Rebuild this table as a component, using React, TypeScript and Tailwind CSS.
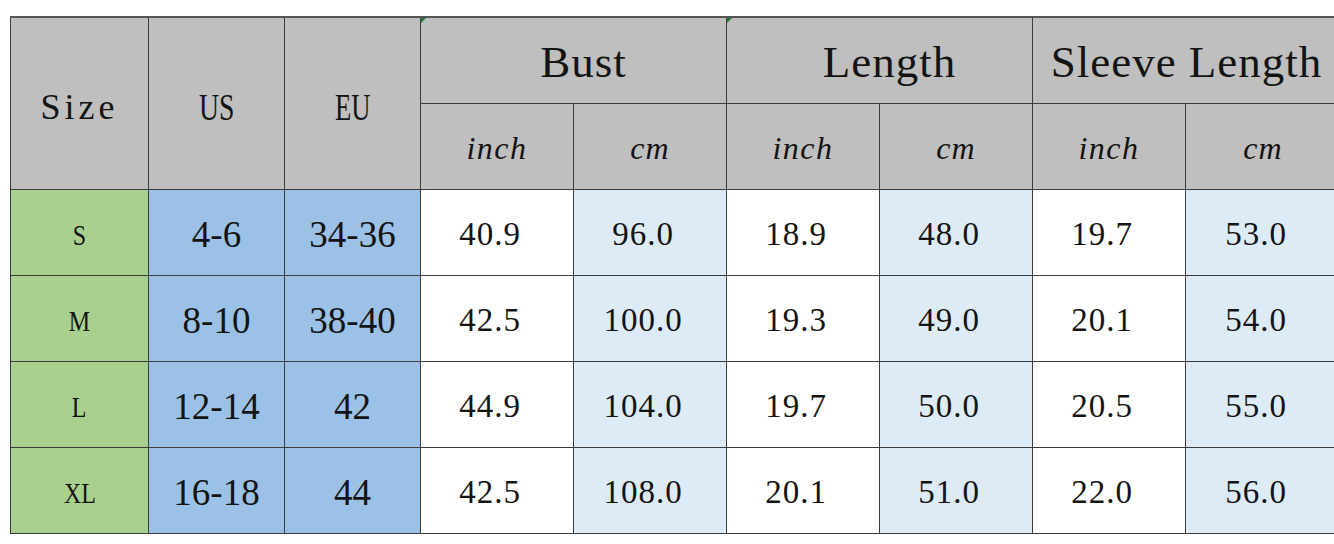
import React from "react";

type Row = {
  size: string;
  us: string;
  eu: string;
  values: Array<string>;
};

const rows: Array<Row> = [
  { size: "S", us: "4-6", eu: "34-36", values: ["40.9", "96.0", "18.9", "48.0", "19.7", "53.0"] },
  { size: "M", us: "8-10", eu: "38-40", values: ["42.5", "100.0", "19.3", "49.0", "20.1", "54.0"] },
  { size: "L", us: "12-14", eu: "42", values: ["44.9", "104.0", "19.7", "50.0", "20.5", "55.0"] },
  { size: "XL", us: "16-18", eu: "44", values: ["42.5", "108.0", "20.1", "51.0", "22.0", "56.0"] },
];

const groups = ["Bust", "Length", "Sleeve Length"];

const cell = "border border-[#3c3c3c] p-0 text-center align-middle";
const head = `${cell} bg-[#bfbfbf] font-normal`;

// little green corner mark, like the spreadsheet flag
const Flag = () => (
  <span className="absolute left-0 top-0 h-0 w-0 border-l-[5px] border-b-[5px] border-l-[#1e7b34] border-b-transparent" />
);

const App = () => {
  return (
    <div className="w-[1334px] h-[544px] overflow-hidden bg-white pt-[16px] pl-[10px] text-[#141414] font-['Liberation_Serif',serif]">
      <table className="w-[1330px] min-w-[1330px] table-fixed border-collapse border-t-2 border-t-[#555]">
        <colgroup>
          <col className="w-[138px]" />
          <col className="w-[136px]" />
          <col className="w-[136px]" />
          <col className="w-[153px]" />
          <col className="w-[153px]" />
          <col className="w-[153px]" />
          <col className="w-[153px]" />
          <col className="w-[153px]" />
          <col className="w-[155px]" />
        </colgroup>
        <thead>
          <tr className="h-[86px]">
            <th rowSpan={2} className={`${head} text-[36px] tracking-[4px] pt-[8px]`}>
              Size
            </th>
            <th rowSpan={2} className={`${head} pt-[8px]`}>
              <span className="inline-block text-[37px] scale-x-[0.75]">US</span>
            </th>
            <th rowSpan={2} className={`${head} pt-[8px]`}>
              <span className="inline-block text-[37px] scale-x-[0.72]">EU</span>
            </th>
            {groups.map((g, i) => (
              <th
                key={g}
                colSpan={2}
                className={`${head} relative text-[45px] tracking-[1px] whitespace-nowrap pt-[4px] ${
                  i < 2 ? "pl-[20px]" : ""
                }`}
              >
                {i < 2 && <Flag />}
                {g}
              </th>
            ))}
          </tr>
          <tr className="h-[86px]">
            {groups.map((g) => (
              <React.Fragment key={g}>
                <th className={`${head} italic text-[32px] tracking-[1.5px] pt-[4px]`}>inch</th>
                <th className={`${head} italic text-[32px] tracking-[1px] pt-[4px]`}>cm</th>
              </React.Fragment>
            ))}
          </tr>
        </thead>
        <tbody>
          {rows.map((r) => (
            <tr key={r.size} className="h-[86px]">
              <td className={`${cell} bg-[#a9d08e] pt-[4px]`}>
                <span className="inline-block text-[30px] scale-x-[0.8]">{r.size}</span>
              </td>
              <td className={`${cell} bg-[#9bc2e6] text-[37px] pt-[6px]`}>{r.us}</td>
              <td className={`${cell} bg-[#9bc2e6] text-[37px] pt-[6px]`}>{r.eu}</td>
              {r.values.map((v, i) => (
                <td
                  key={i}
                  className={`${cell} text-[33px] tracking-[1px] pt-[6px] pr-[14px] ${
                    i % 2 === 1 ? "bg-[#ddebf7]" : "bg-white"
                  }`}
                >
                  {v}
                </td>
              ))}
            </tr>
          ))}
        </tbody>
      </table>
    </div>
  );
};

export default App;
